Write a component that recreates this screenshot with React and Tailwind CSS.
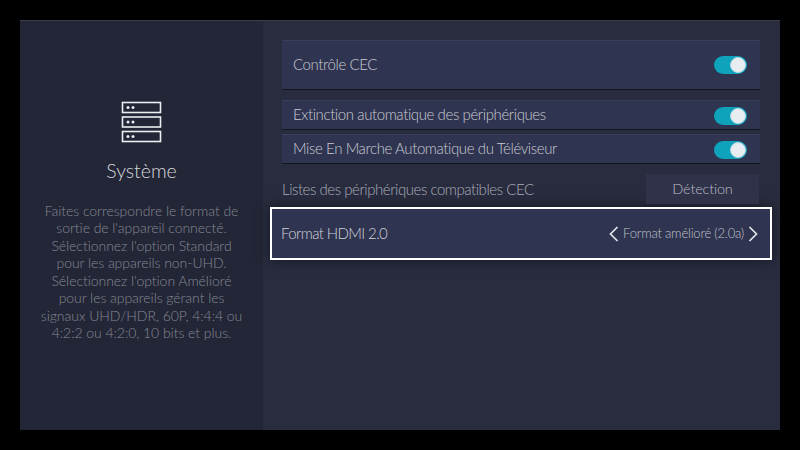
const font = "font-['Lato','Open_Sans',sans-serif]";

function Toggle({ className }) {
    return (
        <div className={`w-[33px] h-[18px] rounded-full bg-[#0ea2bb] flex items-center justify-end pr-[1px] ${className}`}>
            <div className="w-[16px] h-[16px] rounded-full bg-[#e8edf1] border border-[#b5dbe4]" />
        </div>
    );
}

function ToggleRow({ label, tall }) {
    return (
        <div className={`flex items-center justify-between pl-[11px] pr-[13px] bg-[#2f3450] border-t border-t-[#3a3f59] border-b border-b-[#14161f] ${tall ? 'h-[50px]' : 'h-[30px]'}`}>
            <span className={`text-[15px] tracking-[-0.4px] font-light text-[#c9cbd3] ${tall ? 'pb-[2px]' : 'pb-[2px]'}`}>{label}</span>
            <Toggle className={tall ? '' : 'mt-[2px]'} />
        </div>
    );
}

function SystemIcon() {
    return (
        <svg width="42" height="42" viewBox="0 0 42 42" fill="none" className="mb-[15px]">
            {[1, 15.5, 30].map((y) => (
                <g key={y}>
                    <rect x="1.5" y={y + 0.5} width="38" height="10" stroke="#eceef2" strokeWidth="1.6" />
                    <circle cx="12" cy={y + 5.5} r="1.5" fill="#eceef2" />
                    <circle cx="7" cy={y + 5.5} r="1.5" fill="#eceef2" />
                </g>
            ))}
        </svg>
    );
}

function Chevron({ right }) {
    return (
        <svg width="10" height="16" viewBox="0 0 10 16" fill="none">
            <path d={right ? 'M1.5 1L8.5 8L1.5 15' : 'M8.5 1L1.5 8L8.5 15'} stroke="#e4e6ea" strokeWidth="1.7" />
        </svg>
    );
}

export default function App() {
    return (
        <div className={`w-[800px] h-[450px] bg-black p-5 ${font}`}>
            <div className="h-full flex border-t border-t-[#3b3d4c]">
                <aside className="w-[243px] bg-[#232636] flex flex-col items-center pt-[80px] px-[20px]">
                    <SystemIcon />
                    <h1 className="text-[19.5px] font-light text-[#d5d7dc] leading-[26px] mb-[18px]">Système</h1>
                    <p className="text-[14px] tracking-[-0.05px] font-light leading-[17.45px] text-[#858894] text-center">
                        Faites correspondre le format de sortie de l'appareil connecté. Sélectionnez l'option Standard pour les appareils non-UHD. Sélectionnez l'option Amélioré pour les appareils gérant les signaux UHD/HDR, 60P, 4:4:4 ou 4:2:2 ou 4:2:0, 10 bits et plus.
                    </p>
                </aside>
                <main className="flex-1 bg-[#282c3e] pt-[19px] pl-[19px] pr-[20px]">
                    <ToggleRow label="Contrôle CEC" tall />
                    <div className="mt-[10px] flex flex-col gap-[4px]">
                        <ToggleRow label="Extinction automatique des périphériques" />
                        <ToggleRow label="Mise En Marche Automatique du Téléviseur" />
                    </div>
                    <div className="mt-[10px] flex items-center justify-between">
                        <span className="text-[15px] tracking-[-0.45px] font-light text-[#a9acb6]">Listes des périphériques compatibles CEC</span>
                        <div className="w-[113px] h-[30px] mr-px bg-[#2f3249] flex items-center justify-center text-[14.5px] tracking-[-0.2px] font-light text-[#b9bbc4]">Détection</div>
                    </div>
                    <div className="mt-[3px] -ml-[12px] -mr-[12px] h-[53px] bg-[#2f3450] border-2 border-white shadow-[0_0_12px_rgba(0,0,0,0.5)] flex items-center justify-between pl-[9px] pr-[12px]">
                        <span className="text-[15px] tracking-[-0.6px] font-light text-[#d0d2d9]">Format HDMI 2.0</span>
                        <div className="flex items-center text-[13px] tracking-[-0.2px] font-light text-[#c0c2cb]">
                            <Chevron />
                            <span className="mx-[4px]">Format amélioré (2.0a)</span>
                            <Chevron right />
                        </div>
                    </div>
                </main>
            </div>
        </div>
    );
}
